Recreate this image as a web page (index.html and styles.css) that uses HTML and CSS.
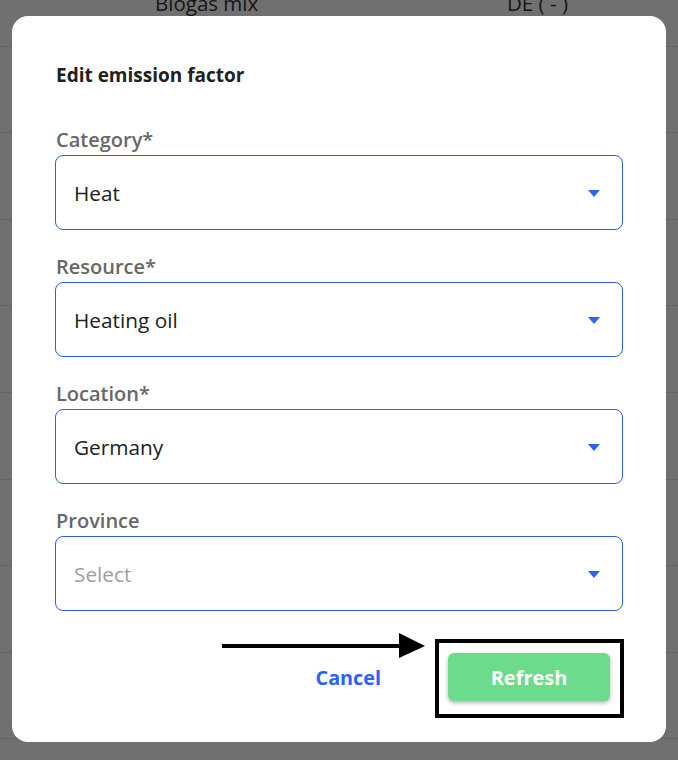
FILE: index.html
```html
<!DOCTYPE html>
<html>
<head>
	<title>Emission factors</title>
	<link rel="stylesheet" href="styles.css">
</head>
<body>
	<div class="factors">
		<div class="row"><span class="name">Biogas mix</span><span class="loc">DE ( - )</span></div>
		<div class="row"><span class="name"></span><span class="loc"></span></div>
		<div class="row"><span class="name"></span><span class="loc"></span></div>
		<div class="row"><span class="name"></span><span class="loc"></span></div>
		<div class="row"><span class="name"></span><span class="loc"></span></div>
		<div class="row"><span class="name"></span><span class="loc"></span></div>
		<div class="row"><span class="name"></span><span class="loc"></span></div>
		<div class="row"><span class="name"></span><span class="loc"></span></div>
		<div class="row"><span class="name"></span><span class="loc"></span></div>
	</div>

	<div class="overlay">
		<div class="modal">
			<h2 class="title">Edit emission factor</h2>

			<div class="field">
				<label>Category*</label>
				<div class="select"><span>Heat</span><i class="caret"></i></div>
			</div>
			<div class="field">
				<label>Resource*</label>
				<div class="select"><span>Heating oil</span><i class="caret"></i></div>
			</div>
			<div class="field">
				<label>Location*</label>
				<div class="select"><span>Germany</span><i class="caret"></i></div>
			</div>
			<div class="field">
				<label>Province</label>
				<div class="select empty"><span>Select</span><i class="caret"></i></div>
			</div>

			<div class="actions">
				<svg class="pointer" width="210" height="28" viewBox="0 0 210 28">
					<rect x="0" y="12" width="180" height="4" fill="#000"/>
					<polygon points="177,1 203,14 177,26" fill="#000"/>
				</svg>
				<button class="cancel">Cancel</button>
				<div class="highlight">
					<button class="refresh">Refresh</button>
				</div>
			</div>
		</div>
	</div>
</body>
</html>
```

FILE: styles.css
```css
* {
	margin: 0px;
	padding: 0px;
	box-sizing: border-box;
}

body {
	font-family: "Open Sans", "Noto Sans", sans-serif;
	background: #fff;
	overflow: hidden;
}

/* table behind the dialog */
.factors {
	margin-top: -40px;
}

.factors .row {
	height: 86.6px;
	display: flex;
	align-items: center;
	border-bottom: 1px solid #e6e6e6;
	font-size: 20.5px;
	color: #333;
}

.factors .name {
	margin-left: 155px;
	width: 352px;
}

/* dim layer + dialog */
.overlay {
	position: fixed;
	inset: 0px;
	background: rgba(0, 0, 0, 0.56);
	padding: 16px 12px 18px 12px;
}

.modal {
	background: #fff;
	border-radius: 16px;
	height: 726px;
	padding: 47px 43px 41px 43px;
}

.title {
	font-size: 19px;
	font-weight: 700;
	color: #212121;
	line-height: 24px;
	margin-left: 1px;
	margin-bottom: 41px;
}

.field {
	margin-bottom: 25px;
}

.field label {
	display: block;
	font-size: 20px;
	font-weight: 600;
	color: #676767;
	line-height: 24px;
	margin-left: 1px;
	margin-bottom: 3px;
}

.select {
	height: 75px;
	border: 1px solid #2f5de6;
	border-radius: 8px;
	display: flex;
	align-items: center;
	justify-content: space-between;
	padding: 0px 22px 0px 18px;
	font-size: 20.8px;
	color: #212121;
}

.select.empty {
	color: #a0a0a0;
}

.caret {
	width: 0px;
	height: 0px;
	border-left: 6px solid transparent;
	border-right: 6px solid transparent;
	border-top: 7px solid #2962ff;
	margin-top: 1px;
}

.actions {
	position: relative;
	display: flex;
	justify-content: flex-end;
	align-items: center;
	margin-top: 42px;
	padding-right: 13px;
}

.cancel {
	background: none;
	border: none;
	font-family: inherit;
	font-size: 19.8px;
	font-weight: 700;
	color: #2962ff;
	margin-right: 67px;
}

.refresh {
	display: block;
	width: 162px;
	height: 48px;
	border: none;
	border-radius: 6px;
	background: #6cdb8b;
	color: #fff;
	font-family: inherit;
	font-size: 20px;
	font-weight: 700;
	box-shadow: 0px 2px 4px rgba(0, 0, 0, 0.3);
}

/* annotation: frame around the refresh button and the arrow pointing at it */
.highlight {
	position: relative;
}

.highlight::after {
	content: "";
	position: absolute;
	top: -14px;
	left: -13px;
	right: -14px;
	bottom: -17px;
	border: 4px solid #000;
}

.pointer {
	position: absolute;
	left: 167px;
	top: -21px;
}
```
